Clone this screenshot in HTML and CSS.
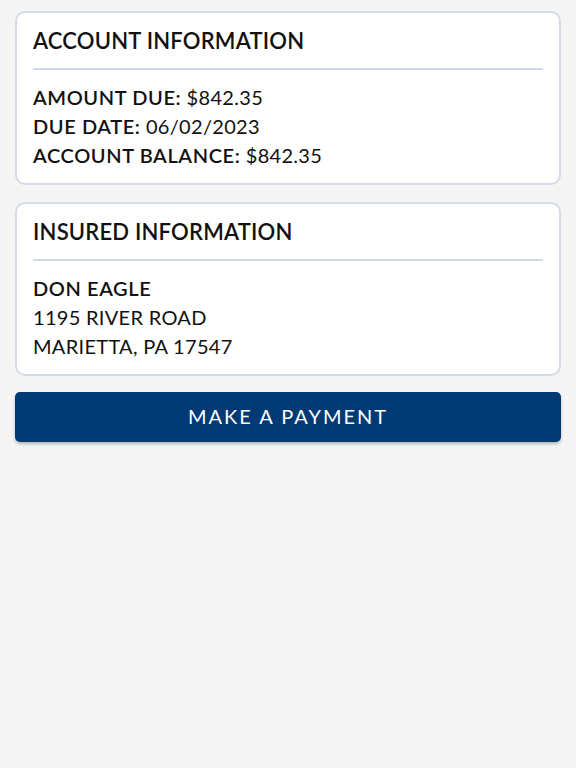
FILE: index.html
```html
<!DOCTYPE html>
<html>
<head>
<meta charset="utf-8">
<link rel="stylesheet" href="styles.css">
</head>
<body>
<main class="page">
  <section class="card">
    <h2 class="card-title">ACCOUNT INFORMATION</h2>
    <div class="divider"></div>
    <div class="card-body">
      <p class="line"><span class="label">AMOUNT DUE:</span> $842.35</p>
      <p class="line"><span class="label">DUE DATE:</span> 06/02/2023</p>
      <p class="line"><span class="label">ACCOUNT BALANCE:</span> $842.35</p>
    </div>
  </section>
  <section class="card">
    <h2 class="card-title">INSURED INFORMATION</h2>
    <div class="divider"></div>
    <div class="card-body">
      <p class="line"><span class="label">DON EAGLE</span></p>
      <p class="line">1195 RIVER ROAD</p>
      <p class="line">MARIETTA, PA 17547</p>
    </div>
  </section>
  <button class="pay-btn">MAKE A PAYMENT</button>
</main>
</body>
</html>
```

FILE: styles.css
```css
html, body {
  margin: 0;
  padding: 0;
  background: #f4f4f4;
}
body {
  font-family: Lato, "Noto Sans", sans-serif;
  color: #111;
}
.page {
  display: flex;
  flex-direction: column;
  gap: 17px;
  padding: 11px 15px;
}
.card {
  background: #fff;
  border: 2px solid #d3dbe6;
  border-radius: 10px;
  padding: 14px 16px 12px;
}
.card-title {
  margin: 0;
  font-size: 22px;
  line-height: 28px;
  font-weight: 600;
  letter-spacing: 0.2px;
}
.divider {
  height: 2px;
  background: #cfd8e4;
  margin: 13px 0 13px;
}
.card-body {
  display: flex;
  flex-direction: column;
  padding-bottom: 1px;
}
.line {
  margin: 0;
  font-size: 20px;
  line-height: 29px;
  font-weight: 400;
  letter-spacing: 0.3px;
}
.label {
  font-weight: 600;
  letter-spacing: 0.6px;
}
.pay-btn {
  height: 50px;
  margin-top: -1px;
  padding: 0 0 3px;
  border: none;
  border-radius: 5px;
  background: #003a74;
  color: #fff;
  font-family: Lato, "Noto Sans", sans-serif;
  font-size: 20px;
  letter-spacing: 2px;
  box-shadow: 0 2px 3px rgba(0, 0, 0, 0.25);
}
```
